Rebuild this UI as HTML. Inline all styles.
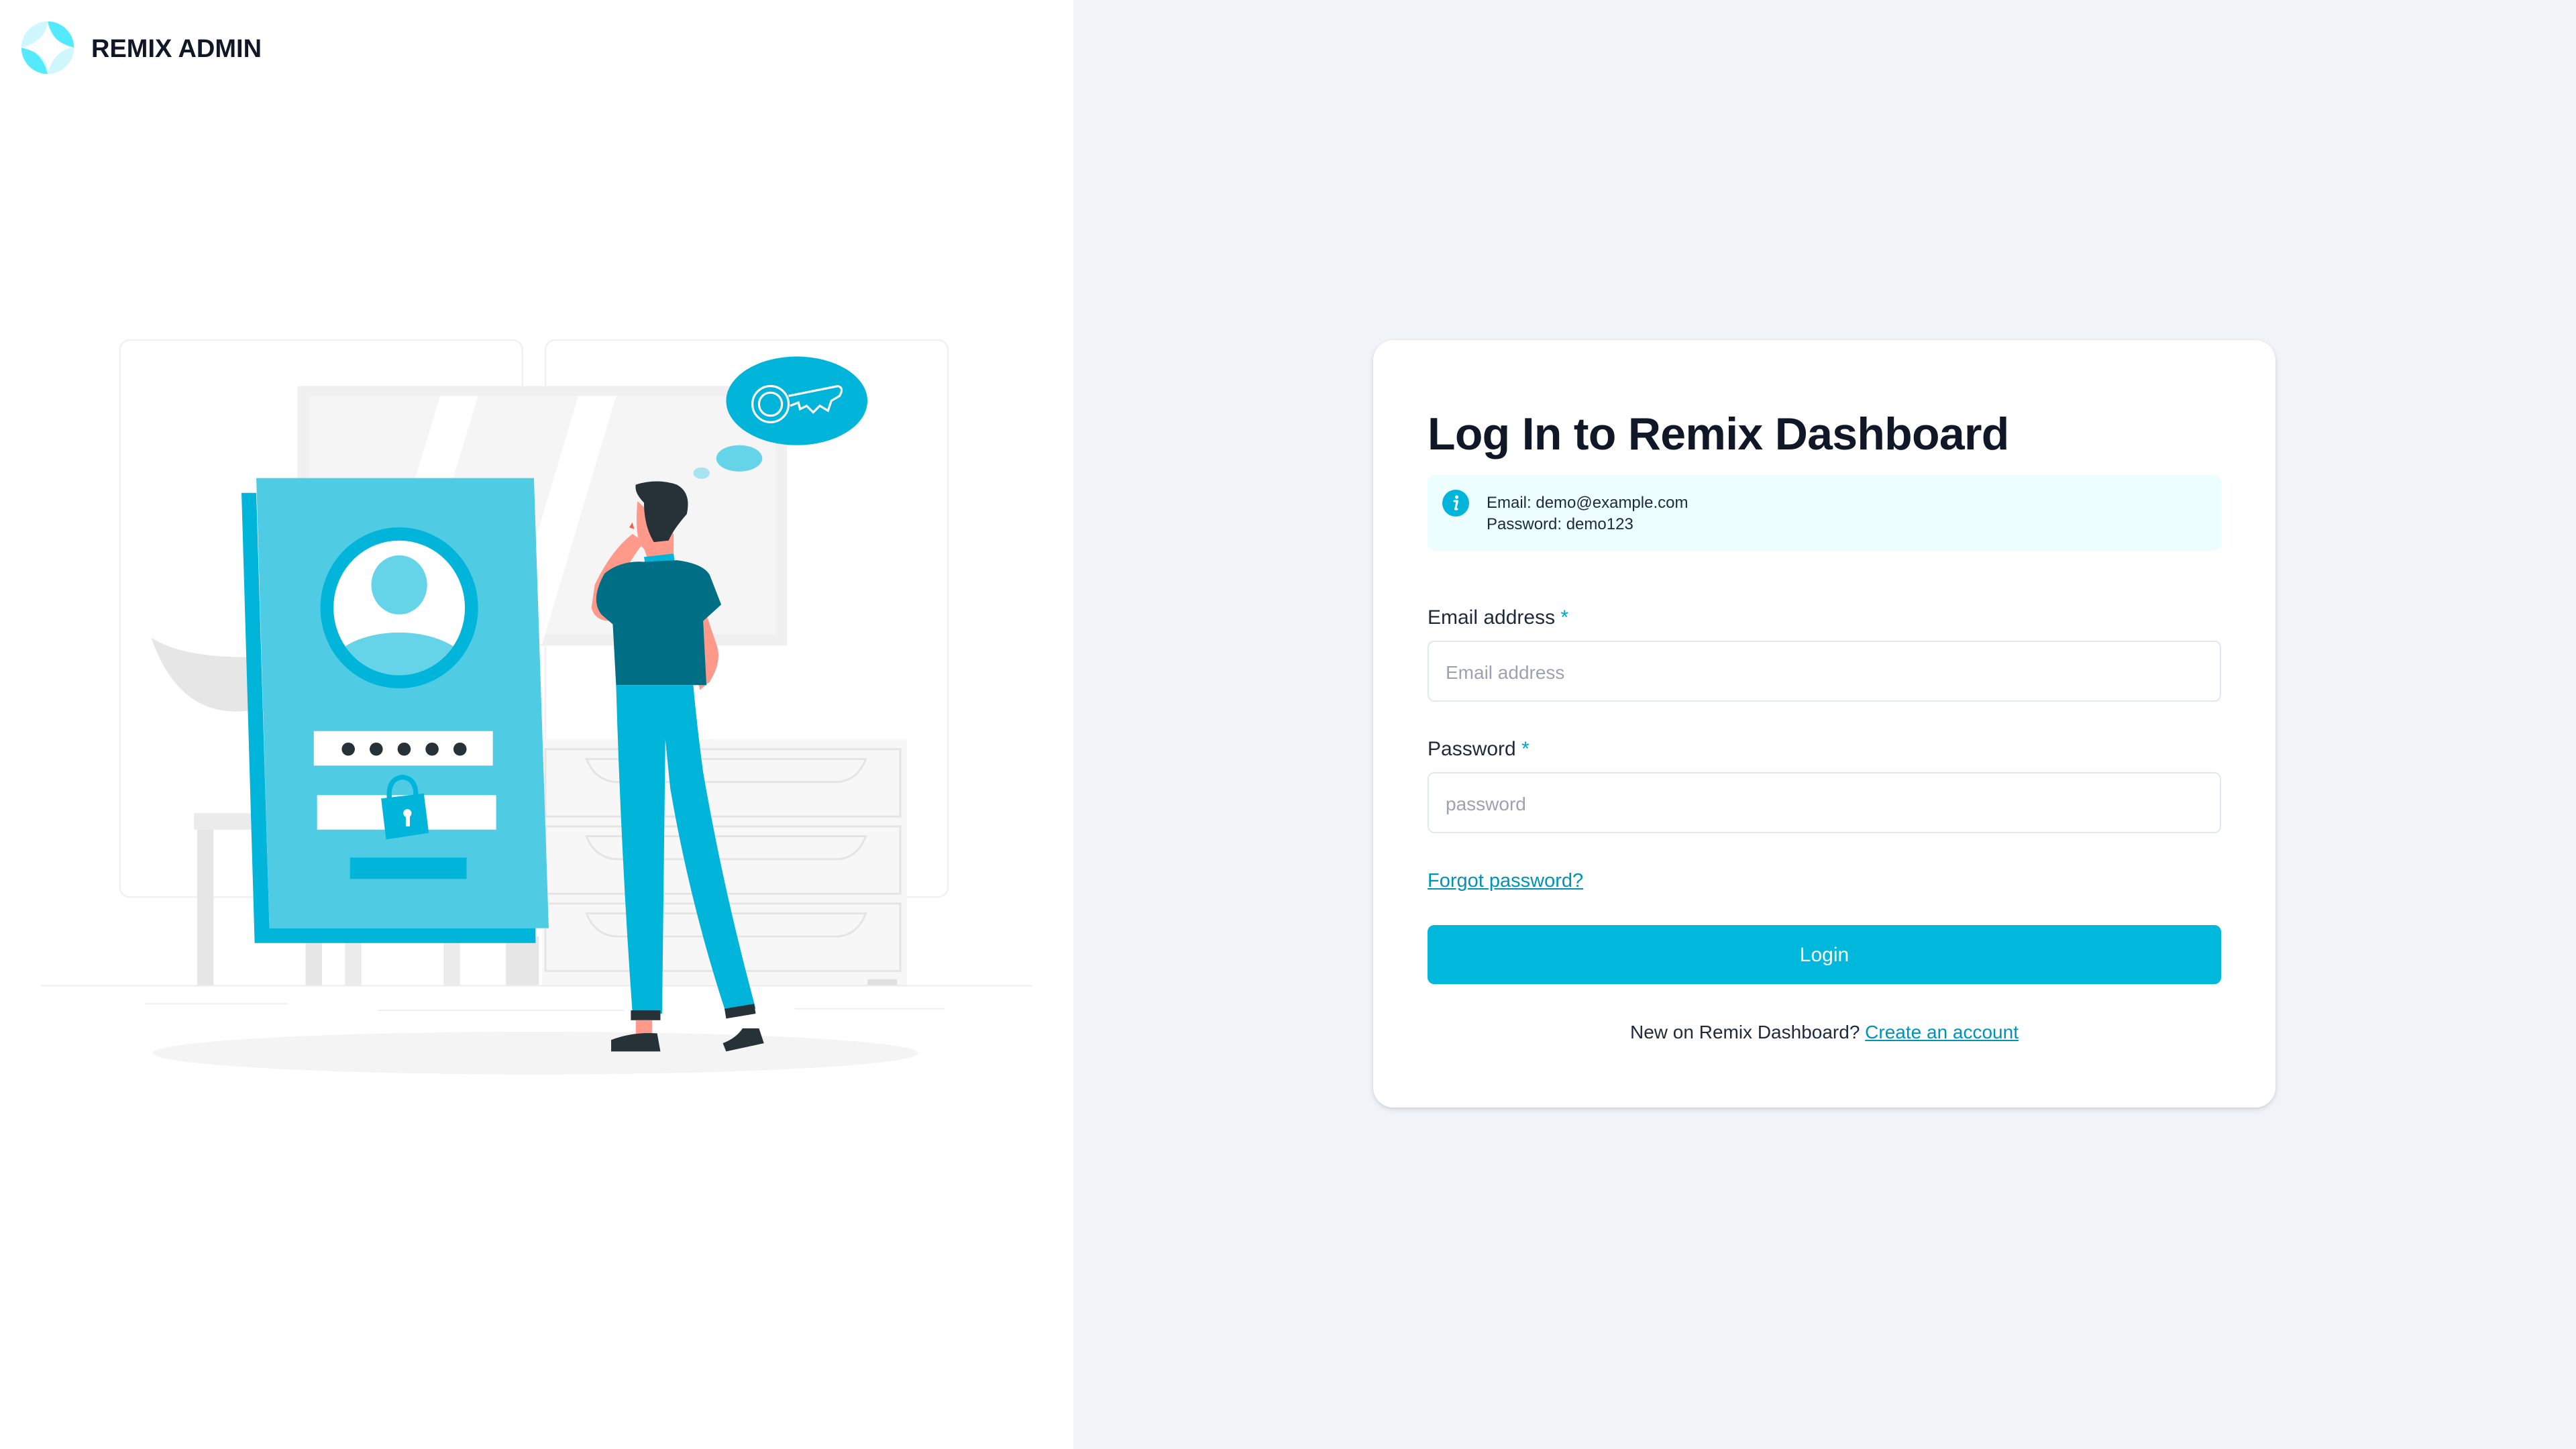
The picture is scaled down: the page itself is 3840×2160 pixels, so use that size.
<!DOCTYPE html>
<html><head><meta charset="utf-8"><style>
*{margin:0;padding:0;box-sizing:border-box}
html,body{width:3840px;height:2160px;overflow:hidden;font-family:"Liberation Sans",sans-serif}
body{background:#f0f4f8;position:relative}
.left{position:absolute;left:0;top:0;width:1600px;height:2160px;background:#fff}
.a{position:absolute;white-space:nowrap}
.card{position:absolute;left:2047px;top:507px;width:1345px;height:1144px;background:#fff;border-radius:30px;box-shadow:0 3px 8px rgba(15,23,42,.12),0 1px 3px rgba(15,23,42,.06)}
.input{position:absolute;left:2128px;width:1183px;height:91px;border:2px solid #e2e8f0;border-radius:10px;background:#fff}
</style></head><body>
<div class="left"></div>
<svg class="a" style="left:0;top:0" width="3840" height="2160" viewBox="0 0 1568 882">
 <g transform="translate(29,29)">
  <circle r="16" fill="#cff8fe"/>
  <path d="M0,-16 A16,16 0 0 1 16,0 Q4,-1 0,-16Z" fill="#53eafd"/>
  <path d="M0,16 A16,16 0 0 1 -16,0 Q-4,1 0,16Z" fill="#53eafd"/>
  <path d="M0,-16 Q-1,-4 -16,0 Q1,4 0,16 Q4,1 16,0 Q1,-4 0,-16Z" fill="#fff"/>
 </g>
 <rect x="73" y="207" width="245" height="339" rx="6" fill="none" stroke="#f1f1f1"/>
 <rect x="332" y="207" width="245" height="339" rx="6" fill="none" stroke="#f1f1f1"/>
 <rect x="181" y="235" width="298" height="158" fill="#f0f0f0"/>
 <rect x="188" y="241" width="284" height="145" fill="#f5f5f5"/>
 <polygon points="268,241 291,241 245,392 222,392" fill="#fff"/>
 <polygon points="352,241 375,241 330,392 307,392" fill="#fff"/>
 <path d="M92,388 Q110,400 150,400 L155,432 Q110,440 92,388Z" fill="#e6e6e6"/>
 <rect x="118" y="495" width="60" height="10" fill="#ebebeb"/>
 <rect x="120" y="505" width="10" height="95" fill="#e6e6e6"/>
 <rect x="186" y="570" width="10" height="30" fill="#e6e6e6"/>
 <rect x="210" y="570" width="10" height="30" fill="#ebebeb"/>
 <rect x="270" y="570" width="10" height="30" fill="#ebebeb"/>
 <rect x="308" y="570" width="20" height="30" fill="#e6e6e6"/>
 <rect x="330" y="450" width="222" height="150" fill="#f7f7f7"/>
 <g fill="none" stroke="#e4e4e4" stroke-width="1.2">
  <rect x="332" y="456" width="216" height="41"/>
  <rect x="332" y="503" width="216" height="41"/>
  <rect x="332" y="550" width="216" height="41"/>
  <path d="M357,462 Q362,475 375,476 L510,476 Q522,475 527,462Z"/>
  <path d="M357,509 Q362,522 375,523 L510,523 Q522,522 527,509Z"/>
  <path d="M357,556 Q362,569 375,570 L510,570 Q522,569 527,556Z"/>
 </g>
 <rect x="528" y="596" width="18" height="4" fill="#e0e0e0"/>
 <line x1="25" y1="600" x2="628" y2="600" stroke="#ececec" stroke-width="0.8"/>
 <line x1="88" y1="611" x2="175" y2="611" stroke="#eee" stroke-width="0.8"/>
 <line x1="230" y1="615" x2="380" y2="615" stroke="#eee" stroke-width="0.8"/>
 <line x1="484" y1="614" x2="575" y2="614" stroke="#eee" stroke-width="0.8"/>
 <ellipse cx="326" cy="641" rx="233" ry="13" fill="#f4f4f4"/>
 <polygon points="147,300 156,300 164,565 326,565 326,574 155,574" fill="#00b5d9"/>
 <polygon points="156,291 325,291 334,565 164,565" fill="#4fcce4"/>
 <ellipse cx="243" cy="370" rx="44" ry="45" fill="#fff" stroke="#00b5d9" stroke-width="8"/>
 <clipPath id="av"><ellipse cx="243" cy="370" rx="40" ry="41"/></clipPath>
 <g clip-path="url(#av)">
  <ellipse cx="243" cy="356" rx="17" ry="18" fill="#66d4e8"/>
  <ellipse cx="243" cy="410" rx="44" ry="25" fill="#66d4e8"/>
 </g>
 <rect x="191" y="445" width="109" height="21" fill="#fff"/>
 <g fill="#263238"><circle cx="212" cy="456" r="4"/><circle cx="229" cy="456" r="4"/><circle cx="246" cy="456" r="4"/><circle cx="263" cy="456" r="4"/><circle cx="280" cy="456" r="4"/></g>
 <rect x="193" y="484" width="109" height="21" fill="#fff"/>
 <path d="M237,486 Q236,474 245,473 Q254,474 253,486" fill="none" stroke="#00b5d9" stroke-width="3"/>
 <polygon points="232,486 258,483 261,507 235,511" fill="#00b5d9"/>
 <circle cx="248" cy="495" r="2.5" fill="#fff"/><rect x="247" y="496" width="2.5" height="7" fill="#fff"/>
 <rect x="213" y="522" width="71" height="13" fill="#00b5d9"/>
 <ellipse cx="485" cy="244" rx="43" ry="27" fill="#00b5d9"/>
 <g fill="none" stroke="#fff" stroke-width="1.3">
  <circle cx="469" cy="246" r="11"/><circle cx="469" cy="246" r="7"/>
  <path d="M480,241 L510,235 Q514,236 511,241 L506,244 L504,250 L499,247 L495,251 L491,247 L487,249 L486,245 L481,247"/>
 </g>
 <ellipse cx="450" cy="279" rx="14" ry="8" fill="#66d4e8"/>
 <ellipse cx="427" cy="288" rx="5" ry="3.5" fill="#a8e4f0"/>
 <path d="M362,356 Q372,335 385,325 L392,330 Q380,345 370,370 L372,378 Q362,378 360,370Z" fill="#ff9a8b"/>
 <path d="M428,368 L436,392 Q440,402 432,415 L426,420 L424,410 Q430,398 428,388Z" fill="#ff9a8b"/>
 <path d="M388,305 Q386,330 392,334 L396,345 L410,345 L410,325 Z" fill="#ff9a8b"/>
 <path d="M385,318 l-2,3 l3,1z" fill="#ff5b4a"/>
 <path d="M387,295 Q400,291 412,295 Q421,300 418,313 Q410,322 407,329 L398,330 Q392,320 392,306 Q386,300 387,295Z" fill="#263238"/>
 <path d="M392,339 L410,337 L411,344 L393,345Z" fill="#00b5d9"/>
 <path d="M368,349 Q378,341 392,342 L412,341 Q428,343 432,350 L439,368 L428,378 L430,417 L375,417 L373,380 L366,374 Q359,365 368,349Z" fill="#006f85"/>
 <path d="M375,417 L422,417 Q424,440 428,470 Q440,540 460,614 L442,617 Q420,550 408,480 L405,450 L403,617 L385,617 Q378,520 375,417Z" fill="#00b5d9"/>
 <rect x="384" y="615" width="18" height="6" fill="#263238"/>
 <polygon points="441,614 459,611 460,617 442,620" fill="#263238"/>
 <rect x="387" y="621" width="10" height="10" fill="#ff9a8b"/>
 <path d="M372,633 Q385,628 400,629 L402,640 L372,640Z" fill="#263238"/>
 <path d="M440,635 Q448,632 452,626 L462,626 L465,635 L442,640Z" fill="#263238"/>
</svg>
<div class="a" style="left:136px;top:50px;font-size:38px;font-weight:700;color:#101828;line-height:46px">REMIX ADMIN</div>

<div class="card"></div>
<div class="a" style="left:2128px;top:607px;font-size:68px;font-weight:700;color:#101828;line-height:80px;letter-spacing:-0.7px">Log In to Remix Dashboard</div>
<div class="a" style="left:2128px;top:708px;width:1183px;height:112px;background:#ecfeff;border-radius:10px"></div>
<svg class="a" style="left:2150px;top:730px" width="40" height="40" viewBox="0 0 40 40"><circle cx="20" cy="20" r="20" fill="#00b5d9"/><circle cx="21.5" cy="11" r="2.6" fill="#fff"/><path d="M18,17 L22.5,17 L19.5,29 L22,29" fill="none" stroke="#fff" stroke-width="3" stroke-linecap="round" stroke-linejoin="round"/></svg>
<div class="a" style="left:2216px;top:734px;font-size:24px;color:#1e293b;line-height:32px">Email: demo@example.com<br>Password: demo123</div>

<div class="a" style="left:2128px;top:903px;font-size:30px;color:#1e293b;line-height:36px">Email address <span style="color:#00a6c8">*</span></div>
<div class="input" style="top:955px"></div>
<div class="a" style="left:2155px;top:985px;font-size:28px;color:#9ca3af;line-height:36px">Email address</div>

<div class="a" style="left:2128px;top:1099px;font-size:30px;color:#1e293b;line-height:36px">Password <span style="color:#00a6c8">*</span></div>
<div class="input" style="top:1151px"></div>
<div class="a" style="left:2155px;top:1181px;font-size:28px;color:#9ca3af;line-height:36px">password</div>

<div class="a" style="left:2128px;top:1295px;font-size:29px;color:#0092b8;line-height:36px;text-decoration:underline">Forgot password?</div>
<div class="a" style="left:2128px;top:1379px;width:1183px;height:88px;background:#00b8db;border-radius:10px;color:#fff;font-size:30px;line-height:90px;text-align:center">Login</div>
<div class="a" style="left:2128px;top:1521px;width:1183px;text-align:center;font-size:28px;color:#1e293b;line-height:36px">New on Remix Dashboard? <span style="color:#0092b8;text-decoration:underline">Create an account</span></div>
</body></html>
